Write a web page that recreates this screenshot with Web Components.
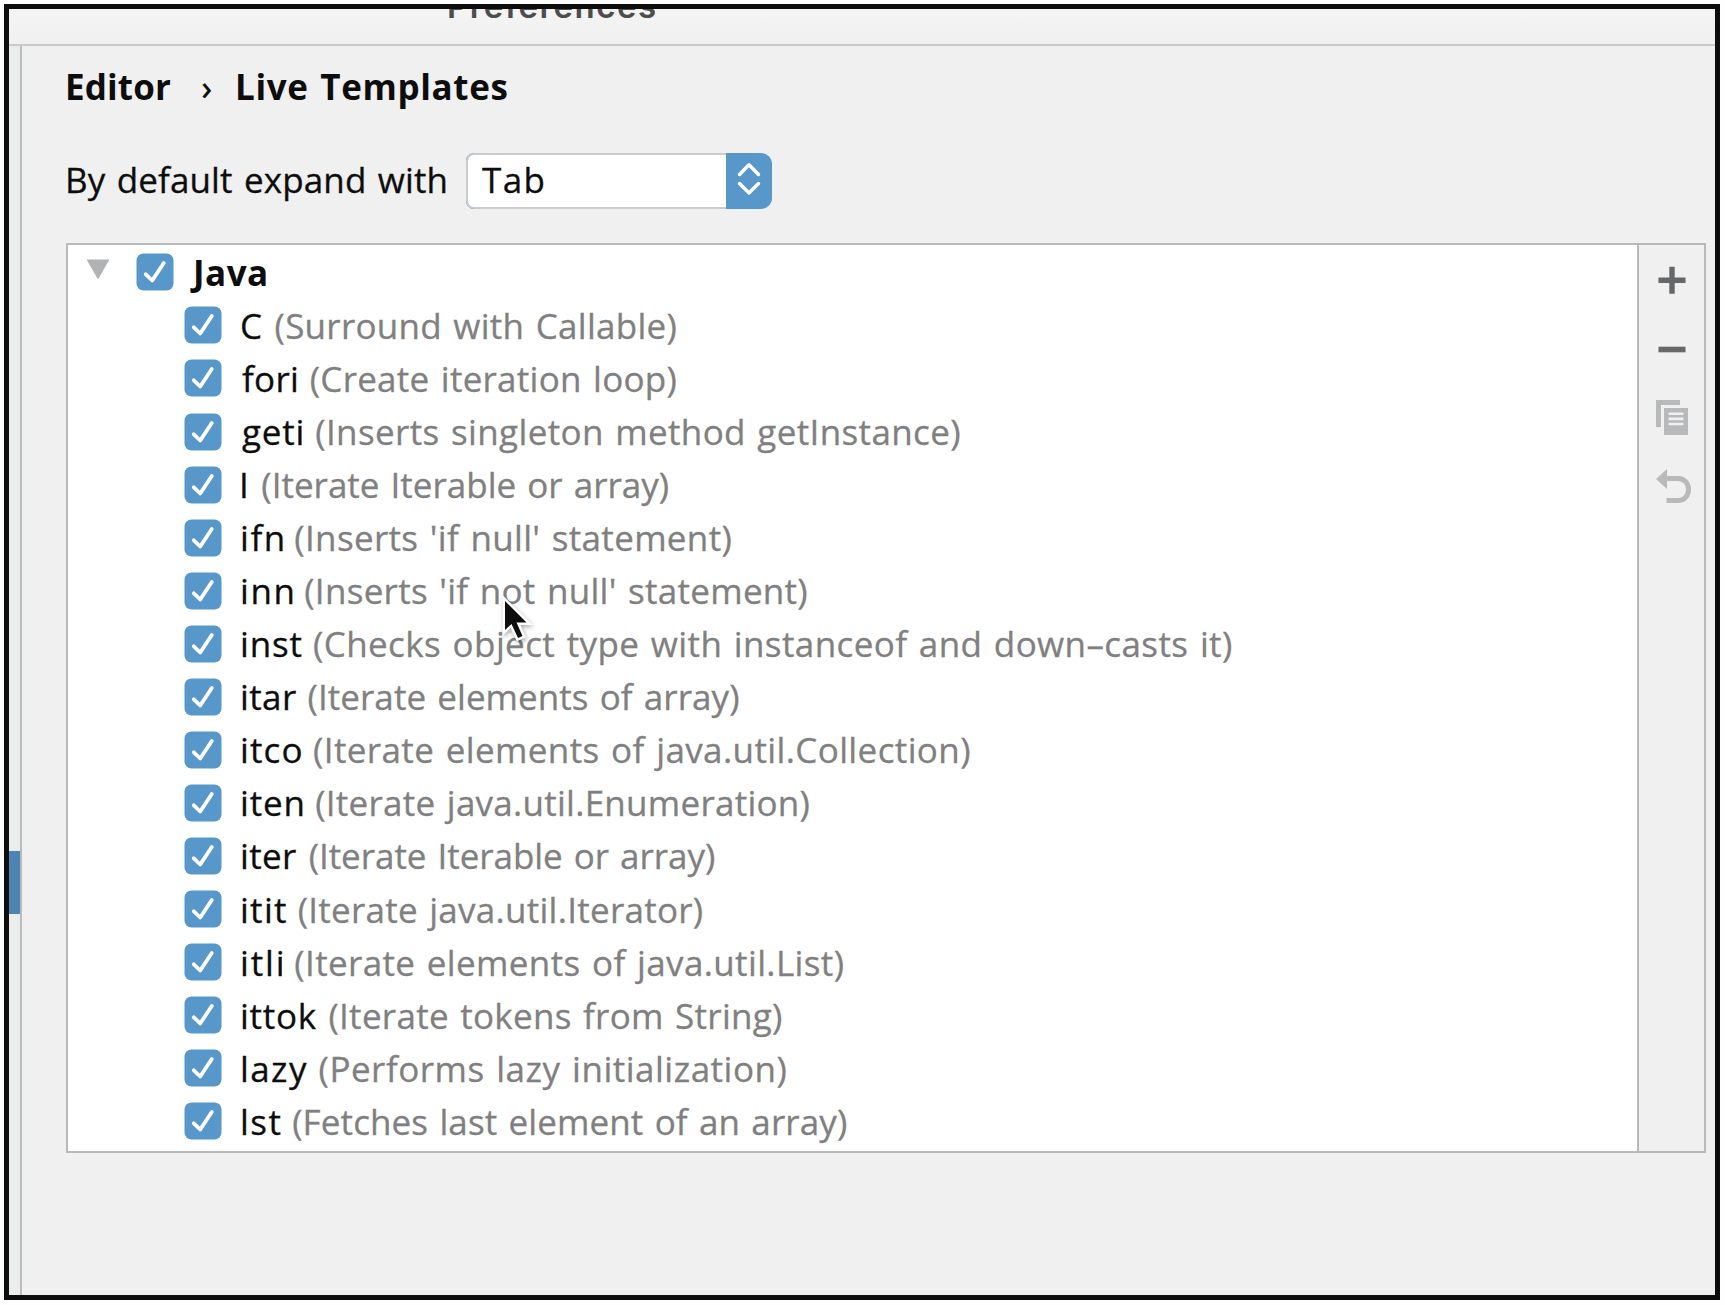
<!DOCTYPE html>
<html lang="en">
<head>
<meta charset="utf-8">
<title>Preferences</title>
<style>
html,body{margin:0;height:100%;background:#fefefe;overflow:hidden}
body{font-family:"Open Sans","Noto Sans",sans-serif;font-size:35px;color:#0d0d0d}
</style>
</head>
<body>
<prefs-window></prefs-window>
<script>
const ctx = document.createElement('canvas').getContext('2d');

/* A run of text whose ink spans a given width (w); box sets the advance to the next item. */
class FitText extends HTMLElement {
  connectedCallback() {
    const root = this.attachShadow({mode:'open'});
    root.innerHTML = '<style>:host{display:block;white-space:pre;flex:none}span{display:block}</style><span></span>';
    const s = root.querySelector('span'), t = this.getAttribute('text'), w = +this.getAttribute('w');
    s.textContent = t;
    const cs = getComputedStyle(this);
    ctx.font = cs.fontWeight + ' ' + cs.fontSize + ' ' + cs.fontFamily;
    const m = ctx.measureText(t);
    const ws = 2, spaces = t.split(' ').length - 1;
    const ink = m.actualBoundingBoxRight + m.actualBoundingBoxLeft + ws * spaces;
    if (t.length > 1) s.style.letterSpacing = (w - ink) / (t.length - 1) + 'px';
    s.style.wordSpacing = ws + 'px';
    s.style.marginLeft = m.actualBoundingBoxLeft + 'px';
    this.style.width = (this.getAttribute('box') || w) + 'px';
  }
}
customElements.define('fit-text', FitText);

class CheckBox extends HTMLElement {
  constructor() {
    super();
    this.attachShadow({mode:'open'}).innerHTML = `<style>:host{display:block;flex:none;width:38px;height:38px}svg{display:block}</style>
    <svg width="38" height="38" viewBox="0 0 38 38"><rect x=".5" y=".5" width="37" height="37" rx="7" fill="#5797ca"/><path d="M9.8 21.3L16.2 27.5L27.8 10" fill="none" stroke="#fff" stroke-width="3.8" stroke-linecap="round" stroke-linejoin="round"/></svg>`;
  }
}
customElements.define('check-box', CheckBox);

class TemplateRow extends HTMLElement {
  connectedCallback() {
    const a = n => this.getAttribute(n);
    this.attachShadow({mode:'open'}).innerHTML = `<style>
      :host{display:flex;align-items:center;height:53.07px;line-height:53.07px;padding-left:116px;-webkit-text-stroke:.3px}
      check-box{margin-right:20px}
      .d{color:#808080}</style>
      <check-box></check-box><fit-text text="${a('name')}" w="${a('nw')}" box="${a('off')}"></fit-text><fit-text class="d" text="${a('desc')}" w="${a('dw')}"></fit-text>`;
  }
}
customElements.define('template-row', TemplateRow);

class GroupRow extends HTMLElement {
  connectedCallback() {
    this.attachShadow({mode:'open'}).innerHTML = `<style>
      :host{display:flex;align-items:center;height:53.07px;line-height:53.07px;padding-left:18px;font-weight:700;box-sizing:border-box}
      svg{margin:-6px 26px 0 0}check-box{margin-right:16px}</style>
      <svg width="24" height="21" viewBox="0 0 24 21"><path d="M.5 .5H23.5L12 20.5Z" fill="#b1b2b3"/></svg>
      <check-box></check-box><fit-text text="Java" w="76"></fit-text>`;
  }
}
customElements.define('group-row', GroupRow);

class SelectBox extends HTMLElement {
  connectedCallback() {
    this.attachShadow({mode:'open'}).innerHTML = `<style>
      :host{display:flex;width:305.5px;height:56px;box-sizing:border-box;border-radius:8px 11px 11px 8px;overflow:hidden;background:#5797ca}
      .v{flex:1;background:#fff;border:2px solid #c9cbcc;border-right:0;border-radius:8px 0 0 8px;padding-left:14px;line-height:49px}
      .b{width:46px;display:flex;align-items:center;justify-content:center}
      svg{margin-top:-4px}</style>
      <div class="v"><fit-text text="Tab" w="61.5"></fit-text></div>
      <div class="b"><svg width="24" height="34" viewBox="0 0 24 34" fill="none" stroke="#fff" stroke-width="3.4" stroke-linecap="round" stroke-linejoin="round"><path d="M2.5 12.5L12 2.7L21.500 12.5M2.5 21.5L12 31L21.500 21.5"/></svg></div>`;
  }
}
customElements.define('select-box', SelectBox);

class ToolBar extends HTMLElement {
  constructor() {
    super();
    this.attachShadow({mode:'open'}).innerHTML = `<style>
      :host{display:flex;flex-direction:column;align-items:center;width:67px;background:#f0f0f0;border-left:2.4px solid #b7b9bb;padding-top:15px;gap:29px;box-sizing:border-box}
      svg{display:block;flex:none}</style>
      <svg width="40" height="40" viewBox="0 0 40 40"><path d="M6.5 20.3H33.5M20 6.8V33.8" stroke="#666768" stroke-width="5.4"/></svg>
      <svg width="40" height="40" viewBox="0 0 40 40"><path d="M6.5 20.500H33.5" stroke="#666768" stroke-width="5.6"/></svg>
      <svg width="40" height="40" viewBox="0 0 40 40"><g transform="translate(-.5 1)"><path d="M7 28V3.500H28.500" stroke="#b8b9bb" stroke-width="5" fill="none"/><path d="M12.500 9H36.500V36H12.500Z" fill="#b8b9bb"/><path d="M17 14.800H32M17 19.900H32M17 25H32" stroke="#f0f0f0" stroke-width="2.600"/></g></svg>
      <svg width="40" height="40" viewBox="0 0 40 40"><path d="M4 12L15 2V22Z" fill="#b8b9bb"/><path d="M13 11.500H26C40 11.500 40 33.500 26 33.500H14.500" fill="none" stroke="#b8b9bb" stroke-width="5"/></svg>`;
  }
}
customElements.define('tool-bar', ToolBar);

const ROWS = [
 ['C','(Surround with Callable)',240,251,615],['fori','(Create iteration loop)',270,283,615],
 ['geti','(Inserts singleton method getInstance)',275,288,873],['I','(Iterate Iterable or array)',226,239,608],
 ['ifn',"(Inserts 'if null' statement)",257,269,665],['inn',"(Inserts 'if not null' statement)",266,278,734],
 ['inst','(Checks object type with instanceof and down–casts it)',274,286,1120],['itar','(Iterate elements of array)',269,281,672],
 ['itco','(Iterate elements of java.util.Collection)',274,286,882],['iten','(Iterate java.util.Enumeration)',275,288,736],
 ['iter','(Iterate Iterable or array)',269,282,650],['itit','(Iterate java.util.Iterator)',260,272,639],
 ['itli','(Iterate elements of java.util.List)',257,269,767],['ittok','(Iterate tokens from String)',288,300,711],
 ['lazy','(Performs lazy initialization)',279,291,715],['lst','(Fetches last element of an array)',255,267,770]];
const K = 1.1001;

class TemplateTree extends HTMLElement {
  constructor() {
    super();
    this.attachShadow({mode:'open'}).innerHTML = `<style>:host{display:block;flex:1;background:#fff;overflow:hidden;padding-top:1.3px}</style><group-row></group-row>` +
      ROWS.map(([n,d,e,s,f]) => `<template-row name="${n}" desc="${d}" nw="${(e-220)*K}" off="${(s-220.5)*K}" dw="${(f-s-.5)*K}"></template-row>`).join('');
  }
}
customElements.define('template-tree', TemplateTree);

class PrefsWindow extends HTMLElement {
  constructor() {
    super();
    this.attachShadow({mode:'open'}).innerHTML = `<style>
      :host{display:flex;flex-direction:column;box-sizing:border-box;width:1716px;height:1296px;margin:4px 0 0 4px;border:5px solid #0d0d0d;background:#f0f0f0;overflow:hidden}
      header{height:37px;flex:none;box-sizing:border-box;border-bottom:2.5px solid #c9cbcd;overflow:hidden;padding-left:440px;font:600 33px/48px Inter,sans-serif;color:#4d4d4e;background:linear-gradient(#f4f4f4,#f0f0f0)}
      header fit-text{margin-top:-27px}
      .body{flex:1;display:flex;min-height:0}
      .side{width:12.5px;box-sizing:border-box;border-right:2.3px solid #b9bbbd;background:#ebecec;padding-top:805px}
      .sel{height:63px;background:#4c84b3}
      main{flex:1;padding:0 8px 0 44.5px;display:flex;flex-direction:column}
      .crumbs{display:flex;height:79.500px;line-height:81.500px;font-weight:700;padding-left:2px}
      .crumbs .sep{font-weight:400;-webkit-text-stroke:.5px}
      .opt{display:flex;align-items:center;height:110px;padding-left:2px;-webkit-text-stroke:.3px}
      .opt .l{padding-bottom:2.500px}
      .panel{display:flex;width:1640px;height:910px;box-sizing:border-box;border:2px solid #b7b9bb;margin-top:7px}
      .cursor{position:absolute;left:498px;top:592px}
    </style>
    <header><fit-text text="Preferences" w="206"></fit-text></header>
    <div class="body">
      <div class="side"><div class="sel"></div></div>
      <main>
        <div class="crumbs"><fit-text text="Editor" w="103" box="134.5"></fit-text><fit-text class="sep" text="›" w="8" box="35.500"></fit-text><fit-text text="Live Templates" w="269.5"></fit-text></div>
        <div class="opt"><fit-text class="l" text="By default expand with" w="377.500" box="398"></fit-text><select-box></select-box></div>
        <div class="panel"><template-tree></template-tree><tool-bar></tool-bar></div>
      </main>
    </div>
    <svg class="cursor" width="40" height="54" viewBox="0 0 40 54"><g style="filter:drop-shadow(1px 2px 2px #0005)"><path d="M7 9V38L13.500 32L20 46L24.500 44L18.500 30.500H28.500Z" fill="#0d0d0d" stroke="#fff" stroke-width="5" paint-order="stroke" stroke-linejoin="miter"/></g></svg>`;
  }
}
customElements.define('prefs-window', PrefsWindow);
</script>
</body>
</html>
